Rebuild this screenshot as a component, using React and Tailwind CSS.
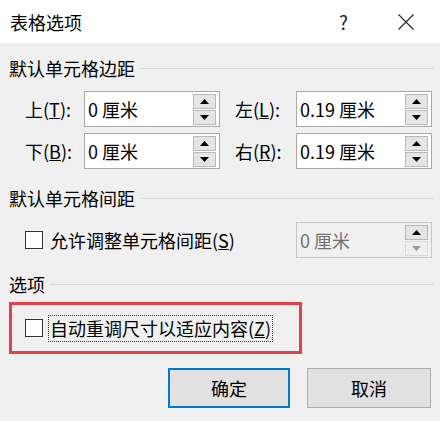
import React from "react";

const FONT = { fontFamily: '"Microsoft YaHei", "Noto Sans CJK SC", "Noto Sans", sans-serif' };

function Spinner({ disabled }) {
  return (
    <div className="flex flex-col gap-[1px] w-[23px] mr-[3px]">
      <div className="h-[15px] bg-[#e5e5e5] border border-[#b9b9b9] flex items-center justify-center">
        <svg width="9" height="5" viewBox="0 0 9 5"><polygon points="0,5 9,5 4.5,0" fill="#000" /></svg>
      </div>
      <div className={"h-[15px] border flex items-center justify-center " + (disabled ? "bg-[#f0f0f0] border-[#dadada]" : "bg-[#e5e5e5] border-[#b9b9b9]")}>
        <svg width="9" height="5" viewBox="0 0 9 5"><polygon points="0,0 9,0 4.5,5" fill={disabled ? "#9a9a9a" : "#000"} /></svg>
      </div>
    </div>
  );
}

function Field({ value, disabled }) {
  return (
    <div className={"w-[136px] h-[36px] border flex items-center justify-between " + (disabled ? "bg-[#f0f0f0] border-[#c6c6c6]" : "bg-white border-[#a9a9a9]")}>
      <span className={"pl-[3px] text-[18px] leading-none " + (disabled ? "text-[#707070]" : "text-black")}>{value}</span>
      <Spinner disabled={disabled} />
    </div>
  );
}

function Heading({ children, mt }) {
  return (
    <div className={"flex items-center h-[20px] " + mt}>
      <span className="text-[18px] leading-none text-black whitespace-nowrap">{children}</span>
      <div className="flex-1 h-[1px] bg-[#dcdcdc] ml-[5px] mr-[6px]" />
    </div>
  );
}

function Checkbox() {
  return <div className="w-[18px] h-[18px] bg-white border border-[#333]" />;
}

export default function App() {
  return (
    <div className="w-[440px] h-[421px] bg-[#f0f0f0] flex flex-col overflow-hidden" style={FONT}>
      <div className="h-[43px] bg-white flex items-center shrink-0">
        <span className="ml-[10px] text-[18px] leading-none text-black">表格选项</span>
        <span className="ml-auto mr-[50px] text-[19px] leading-none text-[#222]">?</span>
        <svg className="mr-[26px]" width="16" height="16" viewBox="0 0 16 16">
          <path d="M0.5 0.5 L15.5 15.5 M15.5 0.5 L0.5 15.5" stroke="#222" strokeWidth="1.1" fill="none" />
        </svg>
      </div>

      <div className="pl-[9px] flex flex-col">
        <Heading mt="mt-[15px]">默认单元格边距</Heading>

        <div className="flex items-center mt-[13px] pl-[16px]">
          <span className="w-[59px] text-[18px] leading-none">上(<u>T</u>):</span>
          <Field value="0 厘米" />
          <span className="w-[61px] ml-[15px] text-[18px] leading-none">左(<u>L</u>):</span>
          <Field value="0.19 厘米" />
        </div>
        <div className="flex items-center mt-[6px] pl-[16px]">
          <span className="w-[59px] text-[18px] leading-none">下(<u>B</u>):</span>
          <Field value="0 厘米" />
          <span className="w-[61px] ml-[15px] text-[18px] leading-none">右(<u>R</u>):</span>
          <Field value="0.19 厘米" />
        </div>

        <Heading mt="mt-[19px]">默认单元格间距</Heading>

        <div className="flex items-center mt-[14px] pl-[16px]">
          <Checkbox />
          <span className="ml-[7px] text-[18px] leading-none">允许调整单元格间距(<u>S</u>)</span>
          <div className="ml-auto mr-[8px]">
            <Field value="0 厘米" disabled />
          </div>
        </div>

        <Heading mt="mt-[16px]">选项</Heading>

        <div className="mt-[8px] w-[293px] h-[52px] border-[3px] border-[#e8404a] flex items-center pl-[13px]">
          <Checkbox />
          <span className="ml-[5px] px-[1px] h-[27px] flex items-center border border-dotted border-[#333] text-[18px] leading-none">
            自动重调尺寸以适应内容(<u>Z</u>)
          </span>
        </div>

        <div className="flex mt-[14px] pl-[159px]">
          <div className="w-[122px] h-[40px] border-2 border-[#0078d7] bg-[#e1e1e1] flex items-center justify-center text-[18px] leading-none">确定</div>
          <div className="ml-[17px] w-[124px] h-[40px] border border-[#adadad] bg-[#e1e1e1] flex items-center justify-center text-[18px] leading-none">取消</div>
        </div>
      </div>
    </div>
  );
}
